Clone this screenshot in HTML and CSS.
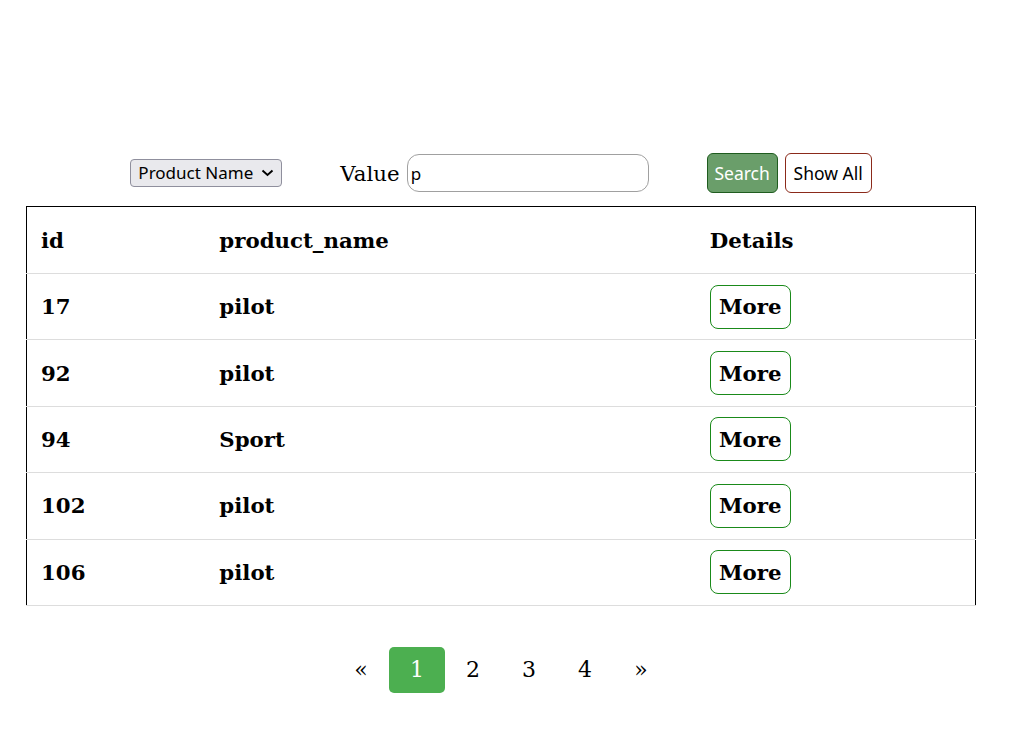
FILE: index.html
```html
<!DOCTYPE html>
<html>
<head>
<meta charset="utf-8">
<link rel="stylesheet" href="styles.css">
</head>
<body>
<div class="wrap">
  <form class="search-row">
    <div class="select-wrap">
      <select class="field-select">
        <option>Product Name</option>
      </select>
      <svg class="chev" width="13" height="8" viewBox="0 0 13 8"><path d="M1.5 1.5 L6.5 6 L11.5 1.5" fill="none" stroke="#000" stroke-width="1.9"/></svg>
    </div>
    <div class="group value-group">
      <label class="value-label">Value</label>
      <input class="value-input" type="text" value="p">
    </div>
    <div class="group btn-group">
      <button type="button" class="btn btn-search">Search</button>
      <button type="button" class="btn btn-show">Show All</button>
    </div>
  </form>
  <table class="data">
    <colgroup><col class="c1"><col class="c2"><col class="c3"></colgroup>
    <tr class="head"><th>id</th><th>product_name</th><th>Details</th></tr>
    <tr><td>17</td><td>pilot</td><td><button class="more">More</button></td></tr>
    <tr><td>92</td><td>pilot</td><td><button class="more">More</button></td></tr>
    <tr><td>94</td><td>Sport</td><td><button class="more">More</button></td></tr>
    <tr><td>102</td><td>pilot</td><td><button class="more">More</button></td></tr>
    <tr><td>106</td><td>pilot</td><td><button class="more">More</button></td></tr>
  </table>
  <div class="pagination">
    <a class="page">&laquo;</a>
    <a class="page active">1</a>
    <a class="page">2</a>
    <a class="page">3</a>
    <a class="page">4</a>
    <a class="page">&raquo;</a>
  </div>
</div>
</body>
</html>
```
FILE: styles.css
```css
html, body { margin: 0; padding: 0; background: #fff; }
body { font-family: "DejaVu Serif", serif; color: #000; }
.wrap { width: 950px; margin-left: 26px; padding-top: 153px; }
.search-row {
  display: flex; align-items: center; justify-content: center;
  gap: 58px; height: 40px; margin: 0 0 13px 0;
}
.group { display: flex; align-items: center; gap: 7px; }
.select-wrap { position: relative; width: 152px; height: 28px; }
.field-select {
  -webkit-appearance: none; appearance: none;
  box-sizing: border-box; width: 152px; height: 28px; margin: 0; padding: 0 0 0 7px;
  font-family: "Noto Sans", sans-serif; font-size: 17px; line-height: 26px;
  background: #e9e9ed; border: 1px solid #8f8f9d; border-radius: 4px; color: #000;
}
.chev { position: absolute; left: 131px; top: 10px; pointer-events: none; }
.value-label { font-size: 21.3px; }
.value-input {
  box-sizing: border-box; width: 242px; height: 38px; margin: 0;
  border: 1px solid #a0a0a0; border-radius: 12px; padding: 0 3px;
  font-family: "Noto Sans", sans-serif; font-size: 17px; color: #000; outline: none;
}
.btn {
  box-sizing: border-box; height: 40px; margin: 0; border-radius: 6px;
  font-family: "Noto Sans", sans-serif; font-size: 17.5px; padding: 0;
}
.btn-search { width: 71px; background: #6a9e6a; color: #fff; border: 1px solid #1f5c1f; }
.btn-show { width: 87px; background: #fff; color: #000; border: 1px solid #8b2a1a; }
.data {
  width: 950px; border-collapse: collapse;
  border-top: 1px solid #000; border-left: 1px solid #000; border-right: 1px solid #000;
  font-size: 21.3px; font-weight: bold;
}
.c1 { width: 178px; } .c2 { width: 491px; } .c3 { width: 281px; }
.data th, .data td {
  text-align: left; padding: 0 15px; height: 65.4px;
  border-bottom: 1px solid #ddd; vertical-align: middle;
}
.data tr.head th { height: 66px; }
.data th:first-child, .data td:first-child { padding-left: 14px; }
.more {
  box-sizing: border-box; height: 44px; width: 81px; padding: 0; margin: 0;
  background: #fff; border: 1px solid #1a8a1a; border-radius: 8px;
  font-family: "DejaVu Serif", serif; font-size: 21.3px; font-weight: bold; color: #000;
}
.pagination { display: flex; justify-content: center; margin-top: 41px; }
.page {
  width: 56px; height: 46px; display: flex; align-items: center; justify-content: center;
  font-size: 22px; color: #000; border-radius: 5px;
}
.page.active { background: #4caf50; color: #fff; }
```
